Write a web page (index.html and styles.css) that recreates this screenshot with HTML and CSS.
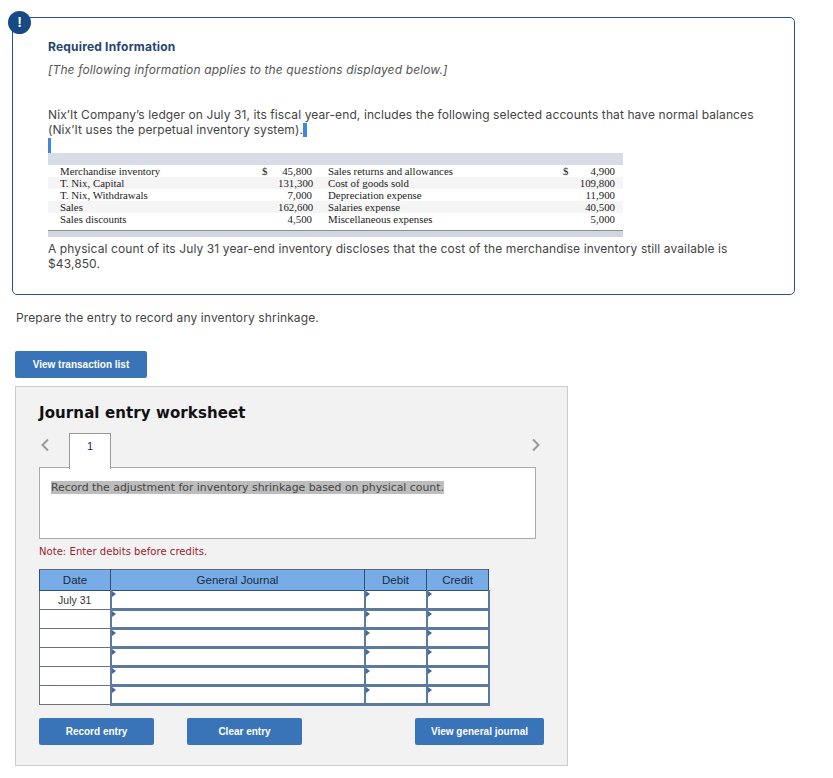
FILE: index.html
```html
<!DOCTYPE html>
<html lang="en">
<head>
<meta charset="utf-8">
<title>Journal entry worksheet</title>
<link rel="stylesheet" href="styles.css">
</head>
<body>
<section class="card">
  <div class="badge">!</div>
  <h2 class="req">Required Information</h2>
  <p class="note-it">[The following information applies to the questions displayed below.]</p>
  <p class="para">Nix’It Company’s ledger on July 31, its fiscal year-end, includes the following selected accounts that have normal balances (Nix’It uses the perpetual inventory system).<span class="sel-end"></span></p>
  <div class="sel-line"></div>
  <table class="ledger">
    <colgroup><col class="n1"><col class="d1"><col class="v1"><col class="n2"><col class="d2"><col class="v2"></colgroup>
    <thead><tr><th colspan="6"></th></tr></thead>
    <tbody>
      <tr><td class="n1">Merchandise inventory</td><td class="d1">$</td><td class="v1">45,800</td><td class="n2">Sales returns and allowances</td><td class="d2">$</td><td class="v2">4,900</td></tr>
      <tr class="alt"><td class="n1">T. Nix, Capital</td><td class="d1"></td><td class="v1">131,300</td><td class="n2">Cost of goods sold</td><td class="d2"></td><td class="v2">109,800</td></tr>
      <tr><td class="n1">T. Nix, Withdrawals</td><td class="d1"></td><td class="v1">7,000</td><td class="n2">Depreciation expense</td><td class="d2"></td><td class="v2">11,900</td></tr>
      <tr class="alt"><td class="n1">Sales</td><td class="d1"></td><td class="v1">162,600</td><td class="n2">Salaries expense</td><td class="d2"></td><td class="v2">40,500</td></tr>
      <tr><td class="n1">Sales discounts</td><td class="d1"></td><td class="v1">4,500</td><td class="n2">Miscellaneous expenses</td><td class="d2"></td><td class="v2">5,000</td></tr>
    </tbody>
  </table>
  <div class="ledger-foot"></div>
  <p class="para after">A physical count of its July 31 year-end inventory discloses that the cost of the merchandise inventory still available is $43,850.</p>
</section>

<p class="prompt">Prepare the entry to record any inventory shrinkage.</p>
<button class="btn list-btn">View transaction list</button>

<section class="sheet">
  <h3 class="sheet-title">Journal entry worksheet</h3>
  <div class="tabs">
    <svg class="chev" width="10" height="14" viewBox="0 0 10 14"><path d="M8 1.5 2.5 7 8 12.5" fill="none" stroke="#9a9a9a" stroke-width="2"/></svg>
    <div class="tab">1</div>
    <svg class="chev right" width="10" height="14" viewBox="0 0 10 14"><path d="M2 1.5 7.5 7 2 12.5" fill="none" stroke="#9a9a9a" stroke-width="2"/></svg>
  </div>
  <div class="desc"><span class="hl">Record the adjustment for inventory shrinkage based on physical count.</span></div>
  <p class="note">Note: Enter debits before credits.</p>
  <table class="journal">
    <colgroup><col class="c-date"><col class="c-gj"><col class="c-dr"><col class="c-cr"></colgroup>
    <thead><tr><th>Date</th><th>General Journal</th><th>Debit</th><th>Credit</th></tr></thead>
    <tbody>
      <tr><td class="date">July 31</td><td class="in"></td><td class="in"></td><td class="in"></td></tr>
      <tr><td class="date"></td><td class="in"></td><td class="in"></td><td class="in"></td></tr>
      <tr><td class="date"></td><td class="in"></td><td class="in"></td><td class="in"></td></tr>
      <tr><td class="date"></td><td class="in"></td><td class="in"></td><td class="in"></td></tr>
      <tr><td class="date"></td><td class="in"></td><td class="in"></td><td class="in"></td></tr>
      <tr><td class="date"></td><td class="in"></td><td class="in"></td><td class="in"></td></tr>
    </tbody>
  </table>
  <div class="actions">
    <button class="btn rec">Record entry</button>
    <button class="btn clr">Clear entry</button>
    <button class="btn gj">View general journal</button>
  </div>
</section>
</body>
</html>
```

FILE: styles.css
```css
* { box-sizing: border-box; }
html, body { margin: 0; padding: 0; background: #fff; }
body { width: 833px; height: 778px; overflow: hidden; font-family: "Inter", "Lato", sans-serif; color: #3d3d3d; }
p, h2, h3 { margin: 0; }

.card { position: relative; width: 783px; height: 278px; margin: 17px 0 0 12px; padding: 21px 35px 0 35px; border: 1px solid #2c5282; border-radius: 5px; }
.badge { position: absolute; left: -5px; top: -7px; width: 23px; height: 23px; border-radius: 50%; background: #174a84; color: #fff; font: bold 14px/23px "Liberation Sans", sans-serif; text-align: center; }
.req { font: bold 12px/15px "Inter", sans-serif; letter-spacing: .2px; color: #24456f; }
.note-it { margin-top: 8px; font: italic 12px/15px "Inter", sans-serif; letter-spacing: .13px; color: #555; }
.para { font-size: 12px; line-height: 15px; letter-spacing: .1px; color: #444; }
.note-it + .para { margin-top: 30px; }
.sel-end { display: inline-block; width: 4px; height: 14px; margin-left: 0; background: #3f87dc; vertical-align: -3px; }
.sel-line { width: 3px; height: 15px; margin-top: 1px; background: #3f87dc; }

.ledger { width: 575px; border-collapse: collapse; table-layout: fixed; font: 10.85px/12px "Liberation Serif", serif; color: #222; }
.ledger col.n1 { width: 214px; }
.ledger col.d1 { width: 16px; }
.ledger col.v1 { width: 34px; }
.ledger col.n2 { width: 251px; }
.ledger col.d2 { width: 16px; }
.ledger col.v2 { width: 44px; }
.ledger th { height: 12px; padding: 0; background: #d8dce7; }
.ledger td { height: 12px; padding: 0; white-space: nowrap; }
.ledger .alt td { background: #f5f5f5; }
.ledger td.n1 { padding-left: 12px; }
.ledger td.v1 { text-align: right; }
.ledger td.n2 { padding-left: 16px; }
.ledger td.v2 { text-align: right; padding-right: 8px; }
.ledger-foot { width: 575px; height: 7px; margin-top: 5px; background: #d2d6e0; border-top: 1px solid #8a8f99; }
.para.after { margin-top: 4px; }

.prompt { margin: 15px 0 0 16px; font-size: 12px; line-height: 16px; letter-spacing: .13px; color: #444; }

.btn { height: 27px; padding: 0; border: 0; border-radius: 2px; background: #3a74b8; color: #fff; font: bold 10px/27px "Liberation Sans", sans-serif; text-align: center; }
.list-btn { display: block; width: 132px; margin: 25px 0 0 15px; }

.sheet { width: 553px; height: 380px; margin: 8px 0 0 15px; padding: 17px 23px 0 23px; background: #f2f2f2; border: 1px solid #ccc; }
.sheet-title { font: bold 15px/19px "DejaVu Sans", sans-serif; letter-spacing: .1px; color: #111; }
.tabs { position: relative; display: flex; align-items: center; height: 36px; margin-top: 10px; z-index: 1; }
.tab { width: 42px; height: 36px; margin-left: 30px; background: #fff; border: 1px solid #999; border-bottom: 0; font: 11px/24px "Liberation Sans", sans-serif; text-align: center; color: #222266; }
.chev { position: absolute; left: 1px; top: 5px; }
.chev.right { left: 492px; }
.desc { width: 497px; height: 72px; margin-top: -2px; padding: 13px 11px 0; background: #fff; border: 1px solid #aaa; font: 10.86px/14px "DejaVu Sans", sans-serif; color: #444; }
.hl { background: #bdbdbd; }
.note { margin-top: 6px; font: 10px/13px "DejaVu Sans", sans-serif; letter-spacing: .05px; color: #a02030; }

.journal { width: 449px; margin-top: 11px; border-collapse: collapse; table-layout: fixed; font: 10.5px/14px "Liberation Sans", sans-serif; color: #1a2a40; }
.journal col.c-date { width: 71px; }
.journal col.c-gj { width: 254px; }
.journal col.c-dr { width: 62px; }
.journal col.c-cr { width: 62px; }
.journal th { height: 21px; padding: 0; background: #78ace6; font-weight: normal; font-size: 11.5px; border: 1px solid #2f4f72; border-top-color: #667; }
.journal td { height: 19px; padding: 0; background: #fff; }
.date { border: 1px solid #6b7178; text-align: center; color: #333; }
.in { position: relative; border: 2px solid #5b7a9e; border-top-width: 1px; border-bottom-width: 3px; }
.in::before { content: ""; position: absolute; left: 0; top: 0; border-left: 4px solid #3f6aa0; border-top: 3px solid transparent; border-bottom: 3px solid transparent; }

.actions { display: flex; margin-top: 12px; }
.rec, .clr { width: 115px; }
.clr { margin-left: 33px; }
.gj { width: 129px; margin-left: 113px; }
```
